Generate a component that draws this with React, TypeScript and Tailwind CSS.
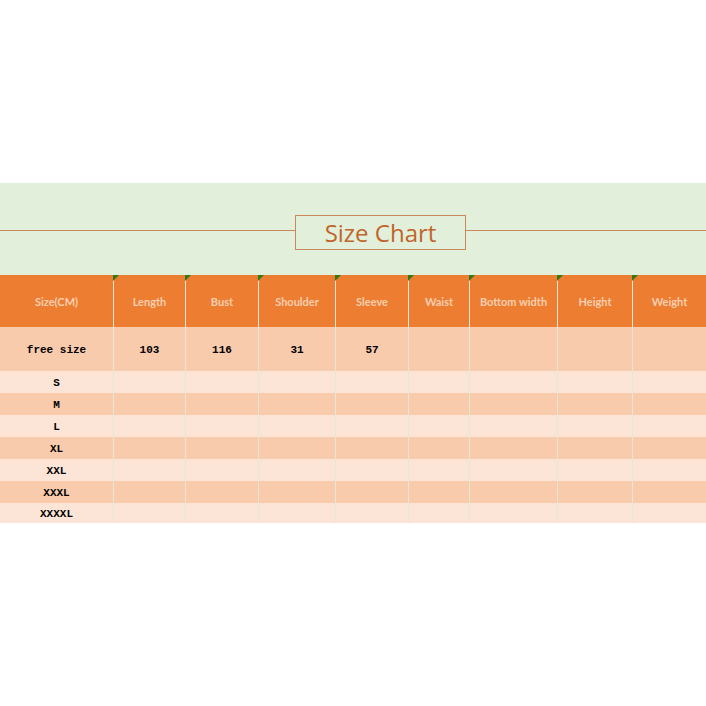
import React from 'react';

const cols = [
  { label: 'Size(CM)', w: 'w-[113px]' },
  { label: 'Length', w: 'w-[72px]' },
  { label: 'Bust', w: 'w-[73px]' },
  { label: 'Shoulder', w: 'w-[77px]' },
  { label: 'Sleeve', w: 'w-[73px]' },
  { label: 'Waist', w: 'w-[61px]' },
  { label: 'Bottom width', w: 'w-[88px]' },
  { label: 'Height', w: 'w-[75px]' },
  { label: 'Weight', w: 'w-[74px]' },
];

const rows: { cells: string[]; h: string; bg: string }[] = [
  { cells: ['free size', '103', '116', '31', '57', '', '', '', ''], h: 'h-[44px]', bg: 'bg-[#f8cbad]' },
  { cells: ['S'], h: 'h-[22px]', bg: 'bg-[#fce4d6]' },
  { cells: ['M'], h: 'h-[22px]', bg: 'bg-[#f8cbad]' },
  { cells: ['L'], h: 'h-[22px]', bg: 'bg-[#fce4d6]' },
  { cells: ['XL'], h: 'h-[22px]', bg: 'bg-[#f8cbad]' },
  { cells: ['XXL'], h: 'h-[22px]', bg: 'bg-[#fce4d6]' },
  { cells: ['XXXL'], h: 'h-[22px]', bg: 'bg-[#f8cbad]' },
  { cells: ['XXXXL'], h: 'h-[20px]', bg: 'bg-[#fce4d6]' },
];

export default function App() {
  return (
    <div className="w-[706px] h-[706px] bg-white flex flex-col">
      <div className="h-[183px]" />

      {/* Title band */}
      <div className="h-[92px] bg-[#e2efda] pt-[32px]">
        <div className="flex items-start">
          <div className="w-[295px] h-px mt-[15px] bg-[#c9875a]" />
          <div className="w-[171px] h-[35px] border border-[#c9875a] flex items-center justify-center text-[#c0652a] text-[24px] font-['Open_Sans',sans-serif] leading-none">
            Size Chart
          </div>
          <div className="flex-1 h-px mt-[15px] bg-[#c9875a]" />
        </div>
      </div>

      {/* Header */}
      <div className="flex h-[52px] bg-[#ed7d31]">
        {cols.map((c, i) => (
          <div
            key={c.label}
            className={`${c.w} relative flex items-center justify-center pt-[3px] text-[11px] font-bold text-[#f9cfb0] font-['Lato',sans-serif] ${i > 0 ? 'border-l border-[#f3e6d6]' : ''}`}
          >
            {i > 0 && (
              <div className="absolute -left-px top-0 w-0 h-0 border-t-[6px] border-t-[#2f7a16] border-r-[6px] border-r-transparent" />
            )}
            {c.label}
          </div>
        ))}
      </div>

      {/* Body */}
      {rows.map((r, ri) => (
        <div key={ri} className={`flex ${r.h} ${r.bg}`}>
          {cols.map((c, i) => (
            <div
              key={c.label}
              className={`${c.w} flex items-center justify-center pt-[3px] text-[11px] font-bold text-black font-['Liberation_Mono',monospace] ${i > 0 ? 'border-l border-[#e6e8d2]' : ''}`}
            >
              {r.cells[i] ?? ''}
            </div>
          ))}
        </div>
      ))}
    </div>
  );
}
